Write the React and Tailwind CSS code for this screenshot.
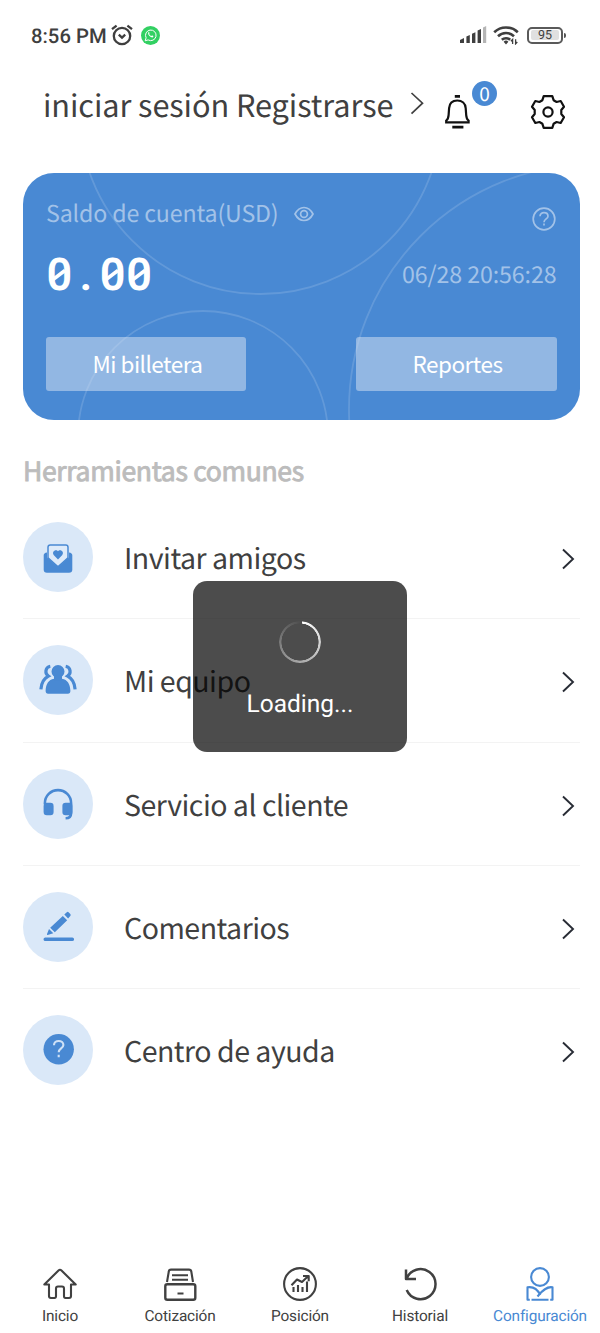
import clsx from "clsx";

const BLUE = "#4989d3";

function StatusBar() {
  return (
    <div className="flex h-[70px] items-center justify-between pl-[30px] pr-[34px] text-[#3f3f3f]">
      <div className="flex items-center">
        <span className="w-[81px] whitespace-nowrap pl-px pt-px font-['Roboto'] text-[20.3px] font-medium leading-[70px]">8:56 PM</span>
        <svg width="22" height="22" viewBox="0 0 22 22" fill="none" stroke="currentColor" strokeWidth="2.3">
          <circle cx="11" cy="12" r="8.2" />
          <path d="M1 5.2 5.6 1.6M21 5.2 16.4 1.6M7.8 10.6l3.2 3 3.2-3" />
        </svg>
        <svg width="19" height="19" viewBox="0 0 19 19" fill="none" className="ml-2">
          <circle cx="9.5" cy="9.5" r="9.5" fill="#32d062" />
          <path d="M4.2 14.8l.9-3A5.3 5.3 0 1 1 7.1 13.9z" stroke="#fff" strokeWidth="1" />
          <path d="M7.3 6.4c-.6 1.3.4 2.8 1.5 3.8s2.6 1.7 3.3.8c.6-.8.3-1-.8-1.5-.6-.3-.8.6-1.2.5-.9-.4-1.5-1-1.9-1.9-.1-.4.5-.6.3-1.1-.3-.9-.6-1.3-1.2-.6z" fill="#fff" />
        </svg>
      </div>
      <div className="flex items-center">
        <svg width="27" height="18" viewBox="0 0 27 18" fill="currentColor">
          <path d="M0 17v-3l4-2v5zM6.4 17v-6.5l3.4-1.6V17zM12 17V7.8l3.4-1.6V17zM17.6 17V4.6L21 3v14z" />
          <path d="M23 17V1.6L26.2 0v17z" fill="#b5b5b5" />
        </svg>
        <svg width="27" height="20" viewBox="0 0 27 20" fill="none" stroke="currentColor" strokeWidth="2.6" className="ml-[6px]">
          <path d="M1.2 7.2a17 17 0 0 1 23.6 0M5 11.2a11.5 11.5 0 0 1 16 0M8.8 14.8a6.6 6.6 0 0 1 8.4 0" />
          <path d="M10.6 16.8a3.4 3.4 0 0 1 4.8 0L13 19.4z" fill="currentColor" stroke="none" />
          <path d="M19.6 19v-4.6l-1.7 1.8M22.6 14.2v4.6l1.7-1.8" strokeWidth="1.3" />
        </svg>
        <div className="ml-[7px] flex h-[17px] w-[36px] items-center rounded-[5px] border-2 border-[#5a5a5a] p-[2px]">
          <span className="h-[10px] w-full rounded-[2px] bg-[#e0e0e0] text-center font-['Roboto'] text-[12.5px] leading-[12px]">95</span>
        </div>
        <span className="ml-px h-[5px] w-[2px] rounded-r bg-[#555]" />
      </div>
    </div>
  );
}

function Header() {
  return (
    <header className="flex h-[103px] items-start pl-[43px]">
      <span className="w-[367px] whitespace-nowrap text-[30.7px] leading-[68px] tracking-[-0.08px] text-[#404040]">iniciar sesión Registrarse</span>
      <svg width="14" height="23" viewBox="0 0 14 23" fill="none" stroke="#404040" strokeWidth="1.7" className="mt-[22px]">
        <path d="M1.5 1 12.5 11.2 1.5 21.7" />
      </svg>
      <div className="relative ml-[20px] mt-[25px]">
        <svg width="27" height="34" viewBox="0 0 27 34" fill="none" stroke="#111" strokeWidth="2.2">
          <path d="M10.8 1.4h5.2M8.3 32.1h11.1" strokeWidth="2.6" />
          <path d="M2.2 27.3v-1.7c1.7-1 2.2-3 2.4-5.4l.5-7C5.4 8.3 8.6 5.5 13.3 5.5s8.1 2.8 8.4 7.7l.5 7c.2 2.4.7 4.4 2.4 5.4v1.7z" />
        </svg>
        <span className="absolute -top-[14px] left-[28px] h-[25px] w-[25px] rounded-full bg-[#4989d3] text-center text-[19px] leading-[26px] text-white">0</span>
      </div>
      <svg width="36" height="36" viewBox="0 0 36 36" fill="none" stroke="#111" strokeWidth="2.2" strokeLinejoin="round" className="ml-[59px] mt-[24px]">
        <circle cx="18" cy="18" r="4.6" />
        <path d="M13.7 2.1H22.3L23.6 6.2 26.6 8 30.7 7 34 12.7 31.3 16V20L34 23.3 30.7 29 26.6 28 23.6 29.8 22.3 33.9H13.7L12.4 29.8 9.4 28 5.3 29 2 23.3 4.7 20V16L2 12.7 5.3 7 9.4 8 12.4 6.2z" />
      </svg>
    </header>
  );
}

function Digit({ children }) {
  return (
    <span className="relative w-[26.6px] text-center">
      {children}
      {children === "0" && (
        <svg width="14" height="14" viewBox="0 0 14 14" className="absolute left-[6px] top-[17px]">
          <path d="M1 11.5 13 2.5" stroke="#fff" strokeWidth="3.6" />
        </svg>
      )}
    </span>
  );
}

function BalanceCard() {
  return (
    <section className="relative ml-[23px] h-[247px] w-[556.5px] overflow-hidden rounded-[31px] bg-[#4989d3] px-[23px]">
      <svg width="557" height="247" viewBox="0 0 557 247" fill="none" stroke="#fff" strokeOpacity="0.14" strokeWidth="1.8" className="absolute left-0 top-0">
        <circle cx="237.5" cy="-60" r="181" />
        <circle cx="180" cy="263" r="125" />
        <circle cx="571" cy="236" r="245" />
      </svg>
      <div className="relative flex h-[78px] items-start justify-between">
        <div className="flex items-center text-[23.2px] leading-[78px] text-[#a2c2e8]">
          <span className="w-[248px] whitespace-nowrap tracking-[-0.15px]">Saldo de cuenta(USD)</span>
          <svg width="20" height="16" viewBox="0 0 20 16" fill="none" stroke="currentColor" strokeWidth="1.7" className="mt-[3px]">
            <path d="M1 8c2.2-4.2 5.2-6.5 9-6.5S16.8 3.8 19 8c-2.2 4.2-5.2 6.5-9 6.5S3.2 12.2 1 8z" />
            <circle cx="10" cy="8" r="3.4" />
          </svg>
        </div>
        <svg width="24" height="24" viewBox="0 0 24 24" fill="none" stroke="#a2c2e8" strokeWidth="1.7" className="mr-[1px] mt-[34px]">
          <circle cx="12" cy="12" r="10.8" />
          <path d="M8 9.3C8 7 9.7 5.6 12 5.6s4 1.5 4 3.6c0 2.6-4 2.9-4 6M12 16.6v2" />
        </svg>
      </div>
      <div className="relative flex h-[86px] items-start justify-between">
        <div className="flex font-['Roboto'] text-[45px] font-semibold leading-[48px] text-white">
          <Digit>0</Digit>
          <Digit>.</Digit>
          <Digit>0</Digit>
          <Digit>0</Digit>
        </div>
        <span className="text-[23.2px] leading-[44px] tracking-[-0.1px] text-[#a2c2e8]">06/28 20:56:28</span>
      </div>
      <div className="relative flex justify-between text-[22.5px] leading-[52px] tracking-[-0.5px] text-white">
        <button className="flex h-[54px] w-[200px] justify-center rounded-[3px] bg-[#dbe6f4]/50 pl-[3px]">Mi billetera</button>
        <button className="flex h-[54px] w-[201px] justify-center rounded-[3px] bg-[#dbe6f4]/50 pl-[3px]">Reportes</button>
      </div>
    </section>
  );
}

const tools = [
  {
    label: "Invitar amigos",
    icon: (
      <g transform="translate(0 2.3)">
        <path d="M9 15.5V5Q9 2.8 11.3 2.8H26.7Q29 2.8 29 5V15.5L19 24.5z" fill="#deebfa" stroke={BLUE} strokeWidth="1.5" />
        <path d="M4.7 13Q4.7 10.8 8 10.3V15.3L17 23Q19 24.6 21 23L30 15.3V10.3Q33.3 10.8 33.3 13V27.5Q33.3 30.5 30 30.5H8Q4.7 30.5 4.7 27.5z" />
        <path d="M19 17.3 14.9 13C13 10.5 14.7 8 17 8c1 0 1.6.5 2 1 .4-.5 1-1 2-1 2.3 0 4 2.5 2.1 5z" />
      </g>
    ),
  },
  {
    label: "Mi equipo",
    icon: (
      <g transform="translate(0 .8)">
        <path d="M11.3 2.4C5.8 3.5 5.8 10 9.4 12.3 5.5 14.3 2.4 17.5 1.9 25.5M26.7 2.4c5.5 1.1 5.5 7.6 1.9 9.9 3.9 2 7 5.2 7.5 13.2" fill="none" stroke={BLUE} strokeWidth="3.2" />
        <path d="M15 11h8v4c5.500 1 8 5 8.400 12q0 3-2.500 3H9.100q-2.500 0-2.500-3c.4-7 2.900-11 8.400-12z" />
        <circle cx="19" cy="7.700" r="7.300" stroke="#dae8f8" strokeWidth="1.600" />
        <path d="M15 12h8v5h-8z" />
      </g>
    ),
  },
  {
    label: "Servicio al cliente",
    icon: (
      <g transform="translate(0 1.2)">
        <path d="M5.9 16V15a13.1 13.1 0 0 1 26.2 0v10c0 3.4-2 5-5.500 5.100" fill="none" stroke={BLUE} strokeWidth="2.6" />
        <rect x="4.6" y="14.5" width="10" height="12.5" rx="3.2" />
        <rect x="23.4" y="14.5" width="10" height="12.5" rx="3.2" />
      </g>
    ),
  },
  {
    label: "Comentarios",
    icon: (
      <>
        <path d="M25.3 4.5 27.8 2.2q1-.8 2 .2l1.500 1.600q.9 1 0 2l-2.200 2.600zM23.800 6 28.200 10.300 15.800 22.200 11.200 17.700zM10 19l4.300 4.200-5.700 1.900q-.9 0-.6-1z" />
        <rect x="4.6" y="27.4" width="30.4" height="3.7" rx="1.7" />
      </>
    ),
  },
  {
    label: "Centro de ayuda",
    icon: (
      <>
        <circle cx="19.7" cy="16.3" r="15.2" />
        <path d="M15 12.200c0-2.600 2-4.200 4.700-4.200s4.700 1.600 4.700 4c0 3.300-4.700 3.600-4.700 7.200M19.700 21.800v2.500" fill="none" stroke="#cfe1f6" strokeWidth="2.1" />
      </>
    ),
  },
];

function ToolRow({ label, icon, last }) {
  return (
    <div className={clsx("flex h-[123.3px] items-center border-b", last ? "border-transparent" : "border-[#f3f3f3]")}>
      <span className="flex h-[70px] w-[70px] items-center justify-center rounded-full bg-[#dae8f8]">
        <svg width="38" height="34" viewBox="0 0 38 34" fill={BLUE}>
          {icon}
        </svg>
      </span>
      <span className="ml-[31px] flex-1 whitespace-nowrap pt-[2px] text-[28.5px] leading-[44px] tracking-[-0.5px] text-[#404040]">{label}</span>
      <svg width="14" height="22" viewBox="0 0 14 22" fill="none" stroke="#282c35" strokeWidth="1.9" className="mr-[5px] mt-[4px]">
        <path d="M2 1.5 12 11 2 20.5" />
      </svg>
    </div>
  );
}

const tabs = [
  {
    label: "Inicio",
    icon: <path d="M2.3 17.5 16.5 3.5Q18 2 19.5 3.5L33.7 17.5H29V29q0 2-2 2H23.5q-1.5 0-1.5-2V21.5q0-2-2-2H16q-2 0-2 2V29q0 2-1.5 2H9q-2 0-2-2V17.5z" />,
  },
  {
    label: "Cotización",
    icon: (
      <>
        <path d="M5 15 6.8 4.5Q7 2.6 9 2.6H27q2 0 2.3 1.9L31 15M10 8.3H26M10 12.8H26M15.5 26.5h6" />
        <rect x="3.3" y="17.3" width="30" height="15.5" rx="2" strokeWidth="2.4" />
      </>
    ),
  },
  {
    label: "Posición",
    icon: (
      <>
        <circle cx="18" cy="17" r="15.9" />
        <path d="M11.5 25v-5M16 25v-7M20.5 25v-5M25 25V14.5M9.5 18.3 15 12.5 20 15 26.3 9M21 9h5.7v5.2" />
      </>
    ),
  },
  {
    label: "Historial",
    icon: <path d="M4 2.5V12H14M4.5 11.8A15 15 0 1 1 4.7 23" strokeWidth="2.5" />,
  },
  {
    label: "Configuración",
    icon: (
      <>
        <circle cx="18" cy="10" r="8.9" />
        <path d="M7.8 32.7H5.5V20.3C10 19.5 15 21.5 18.5 28M28.2 32.7h2.3V20.3C26.5 19.5 20.5 23 15.5 29.5M9.5 32.7H26.5" />
      </>
    ),
  },
];

function TabBar() {
  return (
    <nav className="flex h-[73px] text-[#414141]">
      {tabs.map((tab, i) => (
        <div key={tab.label} className={clsx("flex w-[120px] flex-col items-center pt-[7px]", i === 4 && "text-[#4989d3]")}>
          <svg width="36" height="35" viewBox="0 0 36 35" fill="none" stroke="currentColor" strokeWidth="2.1" strokeLinejoin="round">
            {tab.icon}
          </svg>
          <span className="mt-[4px] whitespace-nowrap font-['Roboto'] text-[15.4px] leading-[20px] tracking-[-0.15px]">{tab.label}</span>
        </div>
      ))}
    </nav>
  );
}

function LoadingToast() {
  return (
    <div className="absolute left-[193px] top-[581px] flex h-[171px] w-[214px] flex-col items-center rounded-[14px] bg-black/70 pt-[40px]">
      <div className="h-[42px] w-[42px] rounded-full bg-[conic-gradient(from_5deg,#ffffff,#ffffff10_95%,#ffffff00)] [mask:radial-gradient(circle,transparent_18.3px,black_18.8px)]" />
      <span className="mt-[25px] font-['Roboto'] text-[24.5px] leading-[32px] text-white">Loading...</span>
    </div>
  );
}

export default function App() {
  return (
    <div className="relative flex h-[1333px] w-[600px] flex-col overflow-hidden bg-white font-['Noto_Sans_CJK_SC',sans-serif] [text-rendering:geometricPrecision]">
      <StatusBar />
      <Header />
      <BalanceCard />
      <h2 className="ml-[23px] mt-[31px] h-[45px] text-[26.5px] leading-[37px] tracking-[-0.3px] text-[#bcbcbc] [-webkit-text-stroke:0.9px_#bcbcbc]">Herramientas comunes</h2>
      <main className="ml-[23px] mr-[20px] flex-1">
        {tools.map((tool, i) => (
          <ToolRow key={tool.label} label={tool.label} icon={tool.icon} last={i === tools.length - 1} />
        ))}
      </main>
      <TabBar />
      <LoadingToast />
    </div>
  );
}
